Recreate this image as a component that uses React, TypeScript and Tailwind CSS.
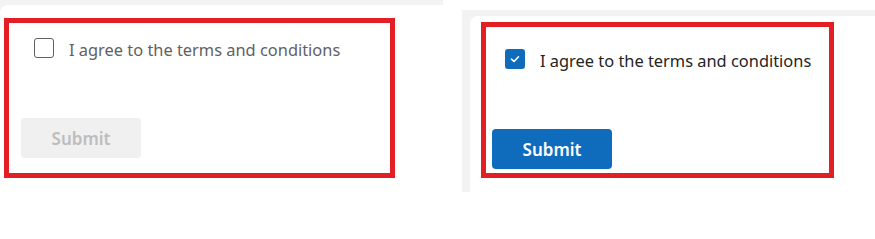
import React from "react";

const font = { fontFamily: '"Segoe UI", "Noto Sans", "Open Sans", sans-serif' };

function Check({ checked }: { checked: boolean }) {
  if (checked) {
    return (
      <span className="flex h-[20px] w-[20px] shrink-0 items-center justify-center rounded-[3px] bg-[#0f6cbd]">
        <svg width="12" height="12" viewBox="0 0 12 12" fill="none">
          <path d="M2.5 6.2 L5 8.5 L9.5 3.8" stroke="white" strokeWidth="1.6" strokeLinecap="round" strokeLinejoin="round" />
        </svg>
      </span>
    );
  }
  return <span className="h-[20px] w-[20px] shrink-0 rounded-[3px] border border-[#616161] bg-white" />;
}

export default function App() {
  return (
    <div className="flex h-[239px] w-[875px] items-start overflow-hidden bg-white" style={font}>
      {/* Left screenshot */}
      <div className="flex h-[195px] w-[443px] shrink-0 flex-col bg-[#f3f3f3] pt-[5px]">
        <div className="flex-1 rounded-tl-[8px] bg-white pl-[4px] pt-[13px]">
          <div className="flex h-[160px] w-[391px] flex-col border-[5px] border-[#e31e24] pl-[12px] pr-[10px]">
            <div className="flex items-center gap-[15px] pl-[13px] pt-[15px]">
              <Check checked={false} />
              <span className="translate-y-[2px] text-[16.4px] leading-[20px] text-[#616161]">I agree to the terms and conditions</span>
            </div>
            <div className="flex-1" />
            <button className="mb-[15px] flex h-[40px] w-[120px] items-center justify-center rounded-[4px] bg-[#f0f0f0] pt-[2px] text-[17px] font-semibold text-[#bdbdbd]">
              Submit
            </button>
          </div>
        </div>
      </div>
      <div className="w-[19px] shrink-0" />
      {/* Right screenshot */}
      <div className="mt-[10px] flex h-[182px] flex-1 flex-col bg-[#f3f3f3] pl-[8px] pt-[6px]">
        <div className="flex-1 rounded-tl-[8px] bg-white pl-[11px] pt-[6px]">
          <div className="flex h-[156px] w-[353px] flex-col border-[5px] border-[#e31e24] pl-[6px]">
            <div className="flex items-center gap-[15px] pl-[13px] pt-[22px]">
              <Check checked={true} />
              <span className="translate-y-[2px] text-[16.4px] leading-[20px] text-[#242424]">I agree to the terms and conditions</span>
            </div>
            <div className="flex-1" />
            <button className="mb-[4px] flex h-[40px] w-[120px] items-center justify-center rounded-[4px] bg-[#0f6cbd] pt-[2px] text-[17px] font-semibold text-white">
              Submit
            </button>
          </div>
        </div>
      </div>
    </div>
  );
}
